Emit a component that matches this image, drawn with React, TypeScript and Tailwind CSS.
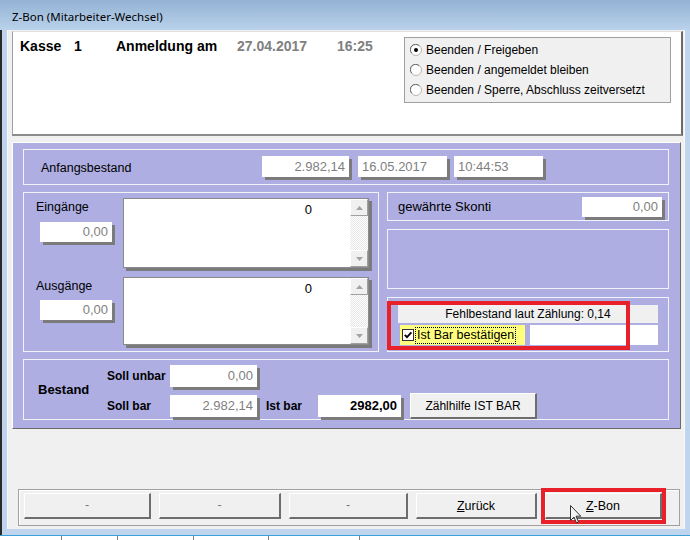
import React from 'react';

// etched section frame inside the purple panel
const sect = 'border border-[#f2f2f9]';

function Field({
  className = '',
  children,
  left = false,
  bold = false,
}: {
  className?: string;
  children?: React.ReactNode;
  left?: boolean;
  bold?: boolean;
}) {
  return (
    <div
      className={`bg-white shadow-[3px_3px_0_#7b7b7b] flex items-center px-[4px] text-[13px] ${
        left ? 'justify-start' : 'justify-end'
      } ${bold ? 'font-bold text-black' : 'text-[#7f7f7f]'} ${className}`}
    >
      {children}
    </div>
  );
}

function ScrollBtn({ up }: { up?: boolean }) {
  return (
    <div className="h-[17px] bg-[#f0f0f0] border-t border-l border-t-white border-l-white border-r border-b border-r-[#a0a0a0] border-b-[#a0a0a0] flex items-center justify-center">
      <svg width="7" height="4" viewBox="0 0 7 4">
        {up ? <path d="M0 4 L3.5 0 L7 4 Z" fill="#a3a3a3" /> : <path d="M0 0 L3.5 4 L7 0 Z" fill="#a3a3a3" />}
      </svg>
    </div>
  );
}

function ListBox({ className }: { className: string }) {
  return (
    <div className={`flex bg-white border border-[#8a8a8a] shadow-[3px_3px_0_#7b7b7b] ${className}`}>
      <div className="flex-1 text-right pr-[38px] pt-[3px] text-[13px] leading-[16px]">0</div>
      <div className="w-[18px] flex flex-col">
        <ScrollBtn up />
        <div className="flex-1 bg-[repeating-conic-gradient(#ffffff_0_25%,#e6e6e6_0_50%)] bg-[length:2px_2px]" />
        <ScrollBtn />
      </div>
    </div>
  );
}

function Radio({ on }: { on?: boolean }) {
  return (
    <svg width="12" height="12" viewBox="0 0 12 12">
      <circle cx="6" cy="6" r="5.5" fill="#ffffff" stroke="#b5b5b5" />
      <path d="M1.8 9.2 A5.2 5.2 0 0 1 9.2 1.8" fill="none" stroke="#6a6a6a" strokeWidth="1" />
      {on && <circle cx="6" cy="6" r="2" fill="#000000" />}
    </svg>
  );
}

const btn =
  'h-[26px] bg-[#f0f0f0] border-t border-l border-t-white border-l-white border-r-2 border-b-2 border-r-[#6d6d6d] border-b-[#6d6d6d] flex items-center justify-center text-[12.5px]';

export default function App() {
  return (
    <div className="w-[690px] h-[540px] overflow-hidden bg-white font-['Liberation_Sans',Arial,sans-serif] text-black select-none">
      {/* title bar */}
      <div className="h-[30px] bg-gradient-to-b from-[#93b2d4] to-[#bad2eb] pl-[12px] pt-[9px] font-['Noto_Sans',sans-serif] text-[11.5px] leading-[16px]">
        Z-Bon (Mitarbeiter-Wechsel)
      </div>

      <div className="flex h-[499px]">
        <div className="w-[8px] bg-[#bed5ed] border-l-2 border-l-[#2a2a2a] border-r border-r-[#f6f9fc]" />

        {/* client area */}
        <div className="w-[676px] bg-[#f0f0f0] pl-[4px] pr-[1px] flex flex-col">
          {/* header panel */}
          <div className="mt-[1px] h-[105px] bg-white border-l border-l-[#a0a0a0] border-t border-t-[#e0e0e0] border-r-2 border-r-[#6b6b6b] border-b-2 border-b-[#8c8c8c] flex">
            <div className="flex-1 pl-[7px] pt-[6px] flex items-start text-[14px] font-bold leading-[16px]">
              <span className="w-[54px]">Kasse</span>
              <span className="w-[42px]">1</span>
              <span className="w-[121px]">Anmeldung am</span>
              <span className="w-[100px] text-[#808080]">27.04.2017</span>
              <span className="text-[#808080]">16:25</span>
            </div>
            <div className="mt-[5px] mr-[10px] w-[267px] h-[66px] bg-[#f0f0f0] border border-[#a0a0a0] pt-[2px] pl-[5px] text-[12px]">
              <div className="h-[20px] flex items-center gap-[4px]">
                <Radio on />
                <span>Beenden / Freigeben</span>
              </div>
              <div className="h-[20px] flex items-center gap-[4px]">
                <Radio />
                <span>Beenden / angemeldet bleiben</span>
              </div>
              <div className="h-[20px] flex items-center gap-[4px]">
                <Radio />
                <span>Beenden / Sperre, Abschluss zeitversetzt</span>
              </div>
            </div>
          </div>

          {/* purple panel */}
          <div className="mt-[6px] mr-[2px] h-[287px] bg-[#aeaee2] border-t border-l border-t-white border-l-white border-r border-b border-r-[#696969] border-b-[#696969] pt-[6px] pl-[10px] pr-[11px] flex flex-col">
            {/* Anfangsbestand */}
            <div className={`h-[36px] ${sect} flex items-start pt-[6px] pl-[17px]`}>
              <span className="w-[221px] pt-[2px] text-[12.5px] leading-[21px]">Anfangsbestand</span>
              <Field className="w-[87px] h-[21px]">2.982,14</Field>
              <Field left className="ml-[9px] w-[89px] h-[21px]">
                16.05.2017
              </Field>
              <Field left className="ml-[7px] w-[89px] h-[21px]">
                10:44:53
              </Field>
            </div>

            <div className="mt-[7px] h-[160px] flex gap-[8px]">
              {/* Eingänge / Ausgänge */}
              <div className={`w-[356px] ${sect} pt-[5px] flex flex-col gap-[9px]`}>
                <div className="flex">
                  <div className="w-[99px] pl-[12px] pt-[1px]">
                    <div className="text-[12.5px] leading-[16px]">Eingänge</div>
                    <Field className="mt-[7px] ml-[4px] w-[72px] h-[20px]">0,00</Field>
                  </div>
                  <ListBox className="w-[246px] h-[70px]" />
                </div>
                <div className="flex">
                  <div className="w-[99px] pl-[12px] pt-[1px]">
                    <div className="text-[12.5px] leading-[16px]">Ausgänge</div>
                    <Field className="mt-[6px] ml-[4px] w-[72px] h-[20px]">0,00</Field>
                  </div>
                  <ListBox className="w-[246px] h-[68px]" />
                </div>
              </div>

              {/* right column */}
              <div className="flex-1 flex flex-col gap-[8px]">
                <div className={`h-[29px] ${sect} flex items-center pl-[10px]`}>
                  <span className="text-[13px]">gewährte Skonti</span>
                  <Field className="ml-auto mr-[6px] w-[80px] h-[20px]">0,00</Field>
                </div>
                <div className={`h-[60px] ${sect}`} />
                <div className={`flex-1 ${sect} relative pt-[7px] px-[10px]`}>
                  <div className="h-[18px] bg-[#f0f0f0] text-center text-[12px] leading-[18px]">
                    Fehlbestand laut Zählung: 0,14
                  </div>
                  <div className="mt-[2px] h-[20px] flex">
                    <div className="ml-[2px] w-[125px] bg-[#ffff7f] flex items-center">
                      <div className="ml-[2px] w-[12px] h-[12px] bg-white border border-[#333333] flex items-center justify-center">
                        <svg width="10" height="10" viewBox="0 0 10 10">
                          <path d="M1.8 4.8 L4 7.2 L8.4 2.4" fill="none" stroke="#000000" strokeWidth="1.8" />
                        </svg>
                      </div>
                      <span className="ml-[1px] px-[1px] border border-dotted border-black text-[12.5px] leading-[15px]">
                        Ist Bar bestätigen
                      </span>
                    </div>
                    <div className="ml-[5px] w-[128px] bg-white" />
                  </div>
                  <div className="absolute left-[-1px] top-[3px] w-[243px] h-[49px] border-4 border-[#e8202a]" />
                </div>
              </div>
            </div>

            {/* Bestand */}
            <div className={`mt-[7px] h-[61px] ${sect} flex pt-[5px]`}>
              <div className="w-[83px] pl-[14px] h-[50px] flex items-center font-bold text-[13px]">Bestand</div>
              <div className="flex flex-col gap-[6px]">
                <div className="flex items-center">
                  <span className="w-[63px] font-bold text-[12px] leading-[22px]">Soll unbar</span>
                  <Field className="w-[87px] h-[22px]">0,00</Field>
                </div>
                <div className="flex items-center">
                  <span className="w-[63px] font-bold text-[12px] leading-[22px]">Soll bar</span>
                  <Field className="w-[87px] h-[22px]">2.982,14</Field>
                  <span className="ml-[9px] w-[52px] font-bold text-[12px] leading-[22px]">Ist bar</span>
                  <Field bold className="w-[83px] h-[22px]">
                    2982,00
                  </Field>
                  <div className={`${btn} ml-[9px] w-[127px] h-[22px] text-[12px]`}>Zählhilfe IST BAR</div>
                </div>
              </div>
            </div>
          </div>

          {/* button bar */}
          <div className="mt-[60px] ml-[6px] mr-[3px] h-[37px] border border-[#a0a0a0] shadow-[inset_1px_1px_0_#ffffff] pl-[5px] pt-[3px] flex gap-[8px]">
            <div className={`${btn} w-[127px] text-[#7a7a7a]`}>-</div>
            <div className={`${btn} w-[122px] text-[#7a7a7a]`}>-</div>
            <div className={`${btn} w-[119px] text-[#7a7a7a]`}>-</div>
            <div className={`${btn} w-[121px] pt-[2px]`}>
              <span className="underline">Z</span>urück
            </div>
            <div className={`${btn} w-[117px] relative pt-[2px]`}>
              <span className="underline">Z</span>-Bon
              <div className="absolute left-[-5px] top-[-6px] w-[125px] h-[36px] border-4 border-[#e8202a]" />
              <svg width="13" height="20" viewBox="0 0 13 20" className="absolute left-[24px] top-[11px]">
                <path
                  d="M0.5 0.5 L0.5 15.5 L4 12 L6.5 18 L8.5 17 L6 11.2 L10.8 11.2 Z"
                  fill="#f4f4f4"
                  stroke="#333333"
                  strokeWidth="1"
                />
              </svg>
            </div>
          </div>
        </div>

        <div className="w-[6px] bg-[#bed5ed] border-l border-l-[#f6f9fc]" />
      </div>

      {/* bottom frame + what lies behind the window */}
      <div className="h-[6px] bg-[#bed5ed] border-l-2 border-l-[#2a2a2a]" />
      <div className="h-[5px] bg-white border-t border-t-[#3aa0d8] flex">
        <div className="w-[62px] border-r border-r-[#808080]" />
        <div className="w-[56px] border-r border-r-[#808080]" />
        <div className="w-[76px] border-r border-r-[#808080]" />
        <div className="w-[75px] border-r border-r-[#808080]" />
        <div className="w-[91px] border-r border-r-[#808080]" />
      </div>
    </div>
  );
}
